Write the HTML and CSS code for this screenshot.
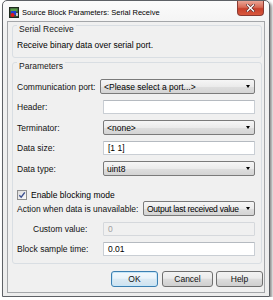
FILE: index.html
```html
<!DOCTYPE html>
<html>
<head>
<meta charset="utf-8">
<link rel="stylesheet" href="styles.css">
</head>
<body>
<div class="window">
  <div class="titlebar">
    <svg class="app-icon" width="10" height="11" viewBox="0 0 10 11">
      <rect x="0.5" y="0.5" width="9" height="10" fill="#3d4f3a" stroke="#1f2a1e"/>
      <rect x="1.5" y="1.5" width="7" height="3" fill="#5aa04a"/>
      <rect x="2" y="4" width="5" height="4" fill="#2040d0"/>
      <circle cx="3.5" cy="8" r="2" fill="#e01818"/>
      <rect x="7" y="6" width="2" height="3" fill="#c8c8c8"/>
    </svg>
    <span class="title">Source Block Parameters: Serial Receive</span>
    <div class="close">
      <svg width="9" height="8" viewBox="0 0 9 8">
        <path d="M1.5 1 L7.5 7 M7.5 1 L1.5 7" stroke="#5a2a2a" stroke-width="2.6" stroke-linecap="square"/>
        <path d="M1.5 1 L7.5 7 M7.5 1 L1.5 7" stroke="#ffffff" stroke-width="1.4" stroke-linecap="square"/>
      </svg>
    </div>
  </div>
  <div class="client">
    <div class="group g1">
      <div class="gtitle">Serial Receive</div>
      <div class="desc">Receive binary data over serial port.</div>
    </div>
    <div class="group g2">
      <div class="gtitle">Parameters</div>
      <div class="row r-comm">
        <span class="label w83">Communication port:</span>
        <div class="combo"><span>&lt;Please select a port...&gt;</span><i class="arrow"></i></div>
      </div>
      <div class="row r-std h14">
        <span class="label w86">Header:</span>
        <div class="field"></div>
      </div>
      <div class="row r-std">
        <span class="label w86">Terminator:</span>
        <div class="combo"><span>&lt;none&gt;</span><i class="arrow"></i></div>
      </div>
      <div class="row r-std h14">
        <span class="label w86">Data size:</span>
        <div class="field">[1 1]</div>
      </div>
      <div class="row r-std">
        <span class="label w86">Data type:</span>
        <div class="combo"><span>uint8</span><i class="arrow"></i></div>
      </div>
      <div class="row r-check">
        <span class="checkbox">
          <svg width="8" height="8" viewBox="0 0 8 8"><path d="M1.3 4.2 L3.2 6.2 L6.8 1.4" fill="none" stroke="#3b4f8f" stroke-width="1.4"/></svg>
        </span>
        <span class="check-label">Enable blocking mode</span>
      </div>
      <div class="row r-action">
        <span class="label w126">Action when data is unavailable:</span>
        <div class="combo tight"><span>Output last received value</span><i class="arrow"></i></div>
      </div>
      <div class="row r-std h14">
        <span class="label w86 indent">Custom value:</span>
        <div class="field disabled">0</div>
      </div>
      <div class="row r-std h14">
        <span class="label w86">Block sample time:</span>
        <div class="field">0.01</div>
      </div>
    </div>
    <div class="buttons">
      <div class="btn ok">OK</div>
      <div class="btn cancel">Cancel</div>
      <div class="btn help">Help</div>
    </div>
  </div>
</div>
</body>
</html>
```

FILE: styles.css
```css
html, body {
  margin: 0;
  padding: 0;
  background: #ffffff;
}
body {
  font-family: "Liberation Sans", Arial, sans-serif;
  font-size: 8.5px;
  color: #000;
}
.window {
  box-sizing: border-box;
  width: 268px;
  height: 297px;
  margin-left: 2px;
  border: 1px solid #5e6166;
  border-radius: 5px 5px 0 0;
  background: linear-gradient(#fbfbfb, #f1f1f1 30px, #ededed);
  box-shadow: 2px 2px 3px rgba(0, 0, 0, 0.45);
  display: flex;
  flex-direction: column;
}
.titlebar {
  height: 20px;
  display: flex;
  align-items: flex-start;
  padding-left: 6px;
}
.app-icon {
  margin-top: 6px;
  flex: 0 0 auto;
}
.title {
  margin-left: 3px;
  margin-top: 6px;
  line-height: 11px;
  font-size: 7.5px;
  color: #000;
  white-space: nowrap;
  flex: 1 1 auto;
}
.close {
  width: 27px;
  height: 15px;
  box-sizing: border-box;
  margin-right: 5px;
  border: 1px solid #8a3a32;
  border-top: none;
  border-radius: 0 0 4px 4px;
  background: linear-gradient(#eaa596, #d86a55 45%, #c7402b 55%, #d9583e);
  display: flex;
  align-items: center;
  justify-content: center;
  flex: 0 0 auto;
}
.client {
  flex: 1 1 auto;
  margin: 0 4px 3px 4px;
  border: 1px solid #a4a6a9;
  background: #f0f0f0;
  display: flex;
  flex-direction: column;
}
.group {
  margin: 0 2px 0 4px;
  border: 1px solid #d9dee3;
  border-radius: 3px;
  display: flex;
  flex-direction: column;
}
.g1 {
  margin-top: 3px;
  height: 33px;
  box-sizing: border-box;
}
.g2 {
  margin-top: 4px;
  padding: 0 6px 7px 4px;
}
.gtitle {
  align-self: flex-start;
  margin: -2px 0 0 4px;
  padding: 0 2px;
  line-height: 11px;
  background: #f0f0f0;
  color: #1a1a1a;
}
.g2 .gtitle {
  margin-left: 0;
}
.desc {
  margin: 5px 0 0 4px;
  line-height: 11px;
}
.row {
  display: flex;
  align-items: center;
  height: 15px;
}
.row.h14 {
  height: 14px;
}
.r-comm {
  margin-top: 7px;
}
.r-std {
  margin-top: 6px;
}
.r-check {
  margin-top: 12px;
  height: 13px;
}
.r-action {
  margin-top: 0;
}
.label {
  flex: 0 0 auto;
  white-space: nowrap;
  color: #111;
}
.w83 { width: 83px; }
.w86 { width: 86px; }
.w126 { width: 126px; }
.indent {
  box-sizing: border-box;
  padding-left: 16px;
}
.combo {
  flex: 1 1 auto;
  height: 100%;
  box-sizing: border-box;
  border: 1px solid #7a7a7a;
  border-radius: 2px;
  background: linear-gradient(#f6f6f6, #ebebeb 50%, #dedede 52%, #d4d4d4);
  display: flex;
  align-items: center;
  padding: 0 4px 0 3px;
  white-space: nowrap;
  overflow: hidden;
}
.combo span {
  flex: 1 1 auto;
}
.combo.tight span {
  letter-spacing: -0.25px;
}
.arrow {
  width: 0;
  height: 0;
  border-left: 2.5px solid transparent;
  border-right: 2.5px solid transparent;
  border-top: 3px solid #000;
  flex: 0 0 auto;
}
.field {
  flex: 1 1 auto;
  height: 100%;
  box-sizing: border-box;
  border: 1px solid #c9ced4;
  border-top-color: #b5bac0;
  border-radius: 1px;
  background: #ffffff;
  padding: 0 4px;
  line-height: 12px;
}
.field.disabled {
  background: #f0f0f0;
  border-color: #d5d8dc;
  color: #a0a0a0;
}
.checkbox {
  box-sizing: border-box;
  width: 10px;
  height: 10px;
  border: 1px solid #8f8f8f;
  background: linear-gradient(135deg, #dcdcdc, #fbfbfb);
  display: flex;
  align-items: center;
  justify-content: center;
  flex: 0 0 auto;
}
.check-label {
  margin-left: 4px;
}
.buttons {
  margin-top: 7px;
  display: flex;
  justify-content: flex-end;
  padding-right: 1px;
}
.btn {
  box-sizing: border-box;
  height: 16px;
  border: 1px solid #707070;
  border-radius: 3px;
  background: linear-gradient(#f3f3f3, #ebebeb 45%, #dddddd 50%, #cfcfcf);
  display: flex;
  align-items: center;
  justify-content: center;
  color: #111;
}
.ok {
  width: 47px;
  border-color: #3c7fb1;
  box-shadow: inset 0 0 0 1px #c6e6f8;
  background: linear-gradient(#f2f8fc, #e9f3fa 45%, #dbeaf4 50%, #cfe2ef);
}
.cancel {
  width: 51px;
  margin-left: 4px;
}
.help {
  width: 47px;
  margin-left: 3px;
}
```
